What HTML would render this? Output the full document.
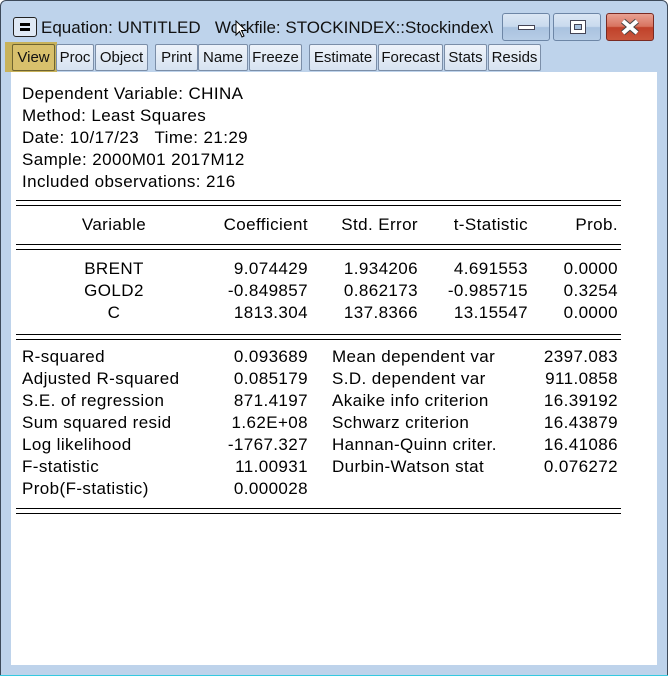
<!DOCTYPE html>
<html><head><meta charset="utf-8"><style>
*{margin:0;padding:0;box-sizing:border-box}
body{width:668px;height:676px;background:#fff;position:relative;overflow:hidden;font-family:"Liberation Sans",Arial,sans-serif}
.frame{position:absolute;left:0;top:0;width:668px;height:676px;background:#bed3eb;border:1px solid #3d4a5a;border-radius:6px 6px 0 0;}
.cyan{position:absolute;left:0;top:675px;width:668px;height:1px;background:#35c9e0}
.title{position:absolute;left:41px;top:18px;font-size:17px;color:#111;white-space:nowrap}
.ico{position:absolute;left:13px;top:17px;width:24px;height:20px;border:1px solid #222;border-radius:3px;background:#dfe9f5}
.ico:before,.ico:after{content:"";position:absolute;left:6px;width:10px;height:3px;background:#000}
.ico:before{top:5px}.ico:after{top:10px}
.wb{position:absolute;top:13px;height:28px;border:1px solid #6d86a6;border-radius:3px;background:linear-gradient(#dbe7f4 0,#c9daee 48%,#a9c2df 52%,#b7cde6 100%)}
.cl{background:linear-gradient(#e8a193 0,#d8735f 48%,#c0412a 52%,#c9563c 100%);border-color:#7a2a22}
.tb{position:absolute;top:44px;height:27px;border:1px solid #7b8ea8;border-radius:2px;background:linear-gradient(#eef3fa,#d7e3f1);font-size:15px;color:#111;text-align:center;line-height:25px}
.white{position:absolute;left:11px;top:72px;width:646px;height:593px;background:#fff}
.t{position:absolute;font-size:17px;letter-spacing:0.4px;color:#000;white-space:nowrap;line-height:22px}
.r{text-align:right}
.hl{position:absolute;left:16px;width:605px;height:2px;background:#000}
</style></head><body>
<div class="frame"></div>
<div class="cyan"></div>
<div class="ico"></div>
<div class="title">Equation: UNTITLED &nbsp;&nbsp;Workfile: STOCKINDEX::Stockindex\</div>
<div class="wb" style="left:502px;width:48px"><div style="position:absolute;left:15px;top:11px;width:17px;height:5px;background:#fff;border:1px solid #445"></div></div>
<div class="wb" style="left:553px;width:48px"><div style="position:absolute;left:16px;top:6px;width:16px;height:14px;background:#fff;border:1px solid #445"><div style="position:absolute;left:3px;top:3px;width:8px;height:6px;background:#a9c2df;border:1px solid #445"></div></div></div>
<div class="wb cl" style="left:606px;width:48px"><svg width="48" height="28" style="position:absolute;left:-1px;top:-1px"><path d="M17 8 L31 20 M31 8 L17 20" stroke="#444" stroke-width="6"/><path d="M17 8 L31 20 M31 8 L17 20" stroke="#fff" stroke-width="4"/></svg></div>
<div style="position:absolute;left:5px;top:42px;width:52px;height:30px;background:#c8b25a"></div>
<div class="tb" style="left:12px;width:43px;background:#d8c06c;border-color:#6f6430">View</div>
<div class="tb" style="left:56px;width:38px">Proc</div>
<div class="tb" style="left:95px;width:53px">Object</div>
<div class="tb" style="left:155px;width:43px">Print</div>
<div class="tb" style="left:198px;width:50px">Name</div>
<div class="tb" style="left:249px;width:53px">Freeze</div>
<div class="tb" style="left:309px;width:68px">Estimate</div>
<div class="tb" style="left:378px;width:65px">Forecast</div>
<div class="tb" style="left:444px;width:43px">Stats</div>
<div class="tb" style="left:488px;width:53px">Resids</div>
<div class="white"></div>
<div class="t" style="left:22px;top:83px">Dependent Variable: CHINA<br>Method: Least Squares<br>Date: 10/17/23 &nbsp;&nbsp;Time: 21:29<br>Sample: 2000M01 2017M12<br>Included observations: 216</div>
<div class="hl" style="top:200px;height:1px"></div><div class="hl" style="top:205px;height:1px"></div>
<div class="t" style="left:54px;width:120px;text-align:center;top:214px">Variable</div>
<div class="t r" style="left:188px;width:120px;top:214px">Coefficient</div>
<div class="t r" style="left:298px;width:120px;top:214px">Std. Error</div>
<div class="t r" style="left:408px;width:120px;top:214px">t-Statistic</div>
<div class="t r" style="left:498px;width:120px;top:214px">Prob.</div>
<div class="hl" style="top:244px;height:1px"></div><div class="hl" style="top:249px;height:1px"></div>
<div class="t" style="left:54px;width:120px;text-align:center;top:258px">BRENT<br>GOLD2<br>C</div>
<div class="t r" style="left:188px;width:120px;top:258px">9.074429<br>-0.849857<br>1813.304</div>
<div class="t r" style="left:298px;width:120px;top:258px">1.934206<br>0.862173<br>137.8366</div>
<div class="t r" style="left:408px;width:120px;top:258px">4.691553<br>-0.985715<br>13.15547</div>
<div class="t r" style="left:498px;width:120px;top:258px">0.0000<br>0.3254<br>0.0000</div>
<div class="hl" style="top:334px;height:1px"></div><div class="hl" style="top:339px;height:1px"></div>
<div class="t" style="left:22px;top:346px">R-squared<br>Adjusted R-squared<br>S.E. of regression<br>Sum squared resid<br>Log likelihood<br>F-statistic<br>Prob(F-statistic)</div>
<div class="t r" style="left:188px;width:120px;top:346px">0.093689<br>0.085179<br>871.4197<br>1.62E+08<br>-1767.327<br>11.00931<br>0.000028</div>
<div class="t" style="left:332px;top:346px">Mean dependent var<br>S.D. dependent var<br>Akaike info criterion<br>Schwarz criterion<br>Hannan-Quinn criter.<br>Durbin-Watson stat</div>
<div class="t r" style="left:498px;width:120px;top:346px">2397.083<br>911.0858<br>16.39192<br>16.43879<br>16.41086<br>0.076272</div>
<div class="hl" style="top:508px;height:1px"></div><div class="hl" style="top:513px;height:1px"></div>
<svg style="position:absolute;left:235px;top:20px" width="14" height="20"><path d="M1 1 L1 15 L4.5 11.5 L7 17 L9 16 L6.5 10.5 L11 10.5 Z" fill="#fff" stroke="#000" stroke-width="1"/></svg>
</body></html>
